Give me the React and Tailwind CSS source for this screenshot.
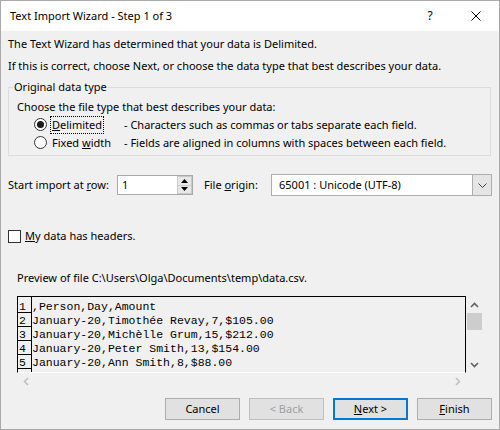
import React from "react";

const rows = [
  ",Person,Day,Amount",
  "January-20,Timothée Revay,7,$105.00",
  "January-20,Michèlle Grum,15,$212.00",
  "January-20,Peter Smith,13,$154.00",
  "January-20,Ann Smith,8,$88.00",
];

function Chevron({ dir = "up", color = "#606060", w = 9, h = 6, sw = 1.6 }) {
  const d =
    dir === "up"
      ? "M1 5 L4.5 1.5 L8 5"
      : dir === "down"
      ? "M1 1 L4.5 4.5 L8 1"
      : dir === "left"
      ? "M5 1 L1.5 4.5 L5 8"
      : "M1 1 L4.5 4.5 L1 8";
  const vb = dir === "up" || dir === "down" ? "0 0 9 6" : "0 0 6 9";
  return (
    <svg width={w} height={h} viewBox={vb} fill="none">
      <path d={d} stroke={color} strokeWidth={sw} />
    </svg>
  );
}

function Btn({ children, cls = "" }) {
  return (
    <div
      className={
        "w-[75px] h-[22px] flex items-center justify-center bg-[#e1e1e1] border " +
        cls
      }
    >
      {children}
    </div>
  );
}

export default function App() {
  return (
    <div className="w-[500px] h-[430px] border border-[#aaaaaa] bg-[#f0f0f0] flex flex-col font-['Noto_Sans',sans-serif] text-[11px] leading-[16px] text-black overflow-hidden">
      {/* Title bar */}
      <div className="h-[30px] shrink-0 bg-white flex items-center">
        <span className="flex-1 pl-[9px]">Text Import Wizard - Step 1 of 3</span>
        <div className="w-[46px] h-full flex items-center justify-center text-[12px]">?</div>
        <div className="w-[46px] h-full flex items-center justify-center">
          <svg width="10" height="10" viewBox="0 0 10 10">
            <path d="M0.5 0.5 L9.5 9.5 M9.5 0.5 L0.5 9.5" stroke="#000" strokeWidth="1" />
          </svg>
        </div>
      </div>

      <div className="mt-[2px] h-[22px] shrink-0 flex items-center pl-[7px]">
        The Text Wizard has determined that your data is Delimited.
      </div>
      <div className="h-[22px] shrink-0 flex items-center pl-[7px]">
        If this is correct, choose Next, or choose the data type that best describes your data.
      </div>

      {/* Group box */}
      <fieldset className="mt-[2px] ml-[7px] w-[483px] shrink-0 border border-[#dcdcdc] pb-[3px]">
        <legend className="ml-[4px] px-[1px] h-[16px] leading-[16px]">Original data type</legend>
        <div className="mt-[3px] h-[18px] flex items-center pl-[8px]">
          Choose the file type that best describes your data:
        </div>
        <div className="h-[17px] flex items-center">
          <div className="ml-[25px] w-[13px] h-[13px] rounded-full border border-[#333333] bg-white flex items-center justify-center">
            <div className="w-[7px] h-[7px] rounded-full bg-[#1a1a1a]" />
          </div>
          <div className="w-[77px] flex items-center">
            <div className="ml-[3px] w-[54px] h-[18px] border border-dotted border-black pl-[1px] flex items-center">
              <span className="underline">D</span>elimited
            </div>
          </div>
          <span>- Characters such as commas or tabs separate each field.</span>
        </div>
        <div className="h-[19px] flex items-center">
          <div className="ml-[25px] w-[13px] h-[13px] rounded-full border border-[#333333] bg-white" />
          <div className="w-[77px] pl-[5px]">
            Fixed <span className="underline">w</span>idth
          </div>
          <span>- Fields are aligned in columns with spaces between each field.</span>
        </div>
      </fieldset>

      {/* Start import row */}
      <div className="mt-[18px] h-[22px] shrink-0 flex items-center pl-[7px]">
        <div className="w-[109px] whitespace-nowrap">
          Start import at <span className="underline">r</span>ow:
        </div>
        <div className="w-[76px] h-[20px] border border-[#a9a9a9] bg-white flex items-stretch">
          <div className="flex-1 pl-[4px] flex items-center">1</div>
          <div className="w-[15px] flex flex-col">
            <div className="flex-1 bg-[#e8e8e8] border border-[#c8c8c8] flex items-center justify-center">
              <svg width="7" height="4" viewBox="0 0 7 4">
                <path d="M0 4 L3.5 0 L7 4 Z" fill="#000" />
              </svg>
            </div>
            <div className="flex-1 bg-[#e8e8e8] border border-t-0 border-[#c8c8c8] flex items-center justify-center">
              <svg width="7" height="4" viewBox="0 0 7 4">
                <path d="M0 0 L3.5 4 L7 0 Z" fill="#000" />
              </svg>
            </div>
          </div>
        </div>
        <div className="ml-[11px] w-[67px] whitespace-nowrap">
          File <span className="underline">o</span>rigin:
        </div>
        <div className="w-[221px] h-[22px] border border-[#adadad] bg-white flex items-stretch">
          <div className="flex-1 pl-[7px] flex items-center">65001 : Unicode (UTF-8)</div>
          <div className="w-[19px] bg-[#e5e5e5] border-l border-[#adadad] flex items-center justify-center">
            <svg width="9" height="5" viewBox="0 0 9 5" fill="none">
              <path d="M0.5 0.5 L4.5 4.5 L8.5 0.5" stroke="#444" strokeWidth="1" />
            </svg>
          </div>
        </div>
      </div>

      {/* Checkbox row */}
      <div className="mt-[32px] h-[16px] shrink-0 flex items-center pl-[7px]">
        <div className="w-[13px] h-[13px] border border-[#333333] bg-white" />
        <span className="ml-[4px]">
          <span className="underline">M</span>y data has headers.
        </span>
      </div>

      <div className="mt-[26px] h-[16px] shrink-0 flex items-center pl-[16px]">
        Preview of file C:\Users\Olga\Documents\temp\data.csv.
      </div>

      {/* Preview */}
      <div className="mt-[10px] shrink-0 flex pl-[16px]">
        <div className="w-[449px] h-[77px] border border-black border-b-white flex font-['Liberation_Mono',monospace] text-[11.5px] leading-[8px] overflow-hidden">
          <div className="w-[14px] h-full border-r border-black flex flex-col">
            {rows.map((_, i) => (
              <div
                key={i}
                className={
                  (i === 0 ? "h-[16px]" : "h-[14px]") +
                  " shrink-0 border-b border-black pl-[1px] pb-[1px] flex items-end"
                }
              >
                {i + 1}
              </div>
            ))}
          </div>
          <div className="flex-1 flex flex-col">
            {rows.map((r, i) => (
              <div
                key={i}
                className={
                  (i === 0 ? "h-[16px]" : "h-[14px]") +
                  " shrink-0 pb-[2px] flex items-end whitespace-pre"
                }
              >
                {r}
              </div>
            ))}
          </div>
        </div>
        <div className="w-[17px] h-[77px] flex flex-col">
          <div className="h-[17px] flex items-center justify-center">
            <Chevron dir="up" />
          </div>
          <div className="h-[17px] mx-[1px] bg-[#cdcdcd]" />
          <div className="flex-1" />
          <div className="h-[17px] flex items-center justify-center">
            <Chevron dir="down" />
          </div>
        </div>
      </div>
      <div className="h-[17px] shrink-0 ml-[16px] w-[449px] flex items-center justify-between">
        <div className="w-[17px] flex justify-center">
          <Chevron dir="left" color="#c0c0c0" w={6} h={9} />
        </div>
        <div className="w-[17px] flex justify-center">
          <Chevron dir="right" color="#c0c0c0" w={6} h={9} />
        </div>
      </div>

      {/* Buttons */}
      <div className="mt-[8px] shrink-0 flex pl-[164px] gap-[9px]">
        <Btn cls="border-[#adadad]">Cancel</Btn>
        <Btn cls="border-[#bfbfbf] text-[#a0a0a0]">&lt; Back</Btn>
        <Btn cls="border-2 border-[#0078d7]">
          <span>
            <span className="underline">N</span>ext &gt;
          </span>
        </Btn>
        <Btn cls="border-[#adadad]">
          <span>
            <span className="underline">F</span>inish
          </span>
        </Btn>
      </div>
    </div>
  );
}
